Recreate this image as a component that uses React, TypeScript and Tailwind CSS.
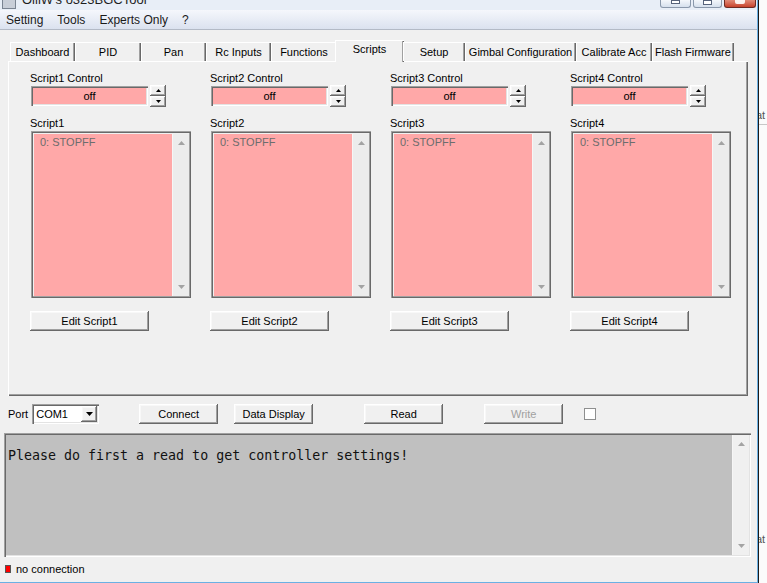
import React from 'react';

const raised =
  'bg-[#f0f0f0] shadow-[inset_-1px_-1px_#696969,inset_1px_1px_#ffffff,inset_-2px_-2px_#a0a0a0,inset_2px_2px_#f8f8f8]';
const sunken =
  'shadow-[inset_1px_1px_#a0a0a0,inset_2px_2px_#696969,inset_-1px_-1px_#ffffff,inset_-2px_-2px_#e3e3e3]';

const tabs = [
  { label: 'Dashboard', w: 65 },
  { label: 'PID', w: 66 },
  { label: 'Pan', w: 65 },
  { label: 'Rc Inputs', w: 65 },
  { label: 'Functions', w: 66 },
  { label: 'Scripts', w: 67, active: true },
  { label: 'Setup', w: 62 },
  { label: 'Gimbal Configuration', w: 111 },
  { label: 'Calibrate Acc', w: 76 },
  { label: 'Flash Firmware', w: 82 },
];

function Arrow({ up, color = '#000', w = 5 }: { up?: boolean; color?: string; w?: number }) {
  const h = Math.ceil(w / 2);
  return (
    <svg width={w} height={h} viewBox={`0 0 ${w} ${h}`}>
      <polygon points={up ? `0,${h} ${w},${h} ${w / 2},0` : `0,0 ${w},0 ${w / 2},${h}`} fill={color} />
    </svg>
  );
}

function ScrollBar({ className = '' }: { className?: string }) {
  return (
    <div className={`w-[17px] shrink-0 bg-[#ececec] border-l border-[#f6f6f6] flex flex-col justify-between items-center py-[7px] ${className}`}>
      <Arrow up color="#a3a3a3" w={7} />
      <Arrow color="#a3a3a3" w={7} />
    </div>
  );
}

function ScriptColumn({ n }: { n: number }) {
  return (
    <div className="w-[180px] shrink-0 flex flex-col">
      <div className="h-[14px] leading-[14px]">Script{n} Control</div>
      <div className="h-[22px] flex items-center">
        <div className={`ml-[1px] w-[117px] h-[20px] bg-[#ffa8a8] ${sunken} flex items-center justify-center`}>off</div>
        <div className="ml-[2px] flex flex-col">
          <div className={`w-[16px] h-[11px] ${raised} flex items-center justify-center`}>
            <Arrow up w={5} />
          </div>
          <div className={`w-[16px] h-[11px] ${raised} flex items-center justify-center`}>
            <Arrow w={5} />
          </div>
        </div>
      </div>
      <div className="mt-[9px] h-[14px] leading-[14px]">Script{n}</div>
      <div className="mt-[1px] ml-[1px] w-[160px] h-[167px] pt-[3px] pl-[3px] pr-[2px] pb-[2px] shadow-[inset_1px_1px_#a0a0a0,inset_2px_2px_#696969,inset_-1px_-1px_#696969,inset_-2px_-2px_#a0a0a0] flex">
        <div className="flex-1 bg-[#ffa8a8] text-[#6d6d6d] pl-[6px] leading-[14px] pt-[1px]">0: STOPFF</div>
        <ScrollBar />
      </div>
      <button className={`mt-[13px] w-[119px] h-[20px] ${raised} flex items-center justify-center text-black`}>
        Edit Script{n}
      </button>
    </div>
  );
}

export default function App() {
  return (
    <div className="w-[767px] h-[583px] bg-[#e4e4e4] flex overflow-hidden font-['Liberation_Sans',Arial,sans-serif] text-[11px] text-black">
      {/* main window */}
      <div className="w-[757px] shrink-0 flex flex-col">
        {/* title bar (cut at top) */}
        <div className="h-[10px] bg-[#e8eef7] flex overflow-hidden relative">
          <div className="ml-[2px] mt-[-5px] w-[14px] h-[14px] bg-[#c8ced8] border border-[#7a8492]" />
          <div className="ml-[6px] mt-[-8px] text-[13px] leading-[16px] text-[#1e1e1e]">OlliW's o323BGCTool</div>
          <div className="ml-auto flex gap-[2px] mr-[1px]">
            <div className="w-[31px] h-[8px] rounded-b-[3px] border border-t-0 border-[#8a98ab] bg-gradient-to-b from-[#f4f7fb] to-[#d6e0ed] flex justify-center">
              <div className="w-[9px] h-[4px] bg-white border border-[#56627a]" />
            </div>
            <div className="w-[29px] h-[8px] rounded-b-[3px] border border-t-0 border-[#8a98ab] bg-gradient-to-b from-[#f4f7fb] to-[#d6e0ed] flex justify-center">
              <div className="w-[9px] h-[5px] bg-white border border-[#56627a]" />
            </div>
            <div className="w-[32px] h-[8px] rounded-b-[3px] border border-t-0 border-[#6d2a22] bg-gradient-to-b from-[#e08a78] to-[#c7402a] flex justify-center">
              <div className="w-[10px] h-[4px] bg-white/90 rounded-b-[2px]" />
            </div>
          </div>
        </div>
        {/* menu bar */}
        <div className="h-[20px] bg-gradient-to-b from-[#f5f7fc] to-[#dbe2ef] border-b border-[#b3bac6] flex items-center text-[12px] text-[#1a1a1a]">
          <span className="ml-[6px]">Setting</span>
          <span className="ml-[14px]">Tools</span>
          <span className="ml-[14px]">Experts Only</span>
          <span className="ml-[14px]">?</span>
        </div>
        {/* client */}
        <div className="flex-1 bg-[#f0f0f0] flex flex-col">
          {/* tabs */}
          <div className="mt-[10px] h-[21px] pl-[10px] flex items-end relative z-10">
            {tabs.map((t) =>
              t.active ? (
                <div
                  key={t.label}
                  style={{ width: t.w + 2 }}
                  className="-ml-[2px] -mr-[1px] h-[22px] -mb-[1px] bg-[#f0f0f0] shadow-[inset_1px_1px_#ffffff,inset_-1px_0_#696969,inset_-2px_0_#a0a0a0] flex items-center justify-center pb-[4px]"
                >
                  {t.label}
                </div>
              ) : (
                <div
                  key={t.label}
                  style={{ width: t.w }}
                  className="h-[19px] bg-[#f0f0f0] shadow-[inset_1px_1px_#ffffff,inset_-1px_0_#696969,inset_-2px_0_#a0a0a0] flex items-center justify-center pt-[1px]"
                >
                  {t.label}
                </div>
              )
            )}
          </div>
          {/* tab page */}
          <div className="ml-[8px] w-[740px] h-[335px] shadow-[inset_1px_1px_#ffffff,inset_-1px_-1px_#696969,inset_-2px_-2px_#a0a0a0] pl-[22px] pt-[10px] flex overflow-hidden">
            {[1, 2, 3, 4].map((n) => (
              <ScriptColumn key={n} n={n} />
            ))}
          </div>
          {/* connection row */}
          <div className="mt-[8px] h-[20px] flex items-center">
            <span className="ml-[8px]">Port</span>
            <div className={`ml-[4px] w-[67px] h-[20px] bg-white ${sunken} flex items-center`}>
              <span className="ml-[4px] flex-1">COM1</span>
              <div className={`w-[16px] h-[16px] mr-[2px] ${raised} flex items-center justify-center`}>
                <Arrow w={7} />
              </div>
            </div>
            <button className={`ml-[40px] w-[79px] h-[20px] ${raised}`}>Connect</button>
            <button className={`ml-[16px] w-[79px] h-[20px] ${raised}`}>Data Display</button>
            <button className={`ml-[51px] w-[79px] h-[20px] ${raised}`}>Read</button>
            <button className={`ml-[41px] w-[79px] h-[20px] ${raised} text-[#a0a0a0]`}>Write</button>
            <div className="ml-[21px] w-[12px] h-[12px] bg-white border border-[#8e8f8f]" />
          </div>
          {/* output */}
          <div className={`mt-[9px] ml-[4px] w-[747px] h-[124px] bg-[#c0c0c0] ${sunken} p-[2px] flex`}>
            <div className="flex-1 pl-[2px] pt-[13px] font-['DejaVu_Sans_Mono',monospace] text-[13.3px] leading-[16px] text-[#111]">
              Please do first a read to get controller settings!
            </div>
            <ScrollBar className="bg-[#f0f0f0]" />
          </div>
          {/* status */}
          <div className="mt-[4px] h-[16px] flex items-center">
            <div className="ml-[5px] w-[6px] h-[8px] bg-[#ff0000] border border-[#555]" />
            <span className="ml-[5px]">no connection</span>
          </div>
        </div>
        <div className="h-[1px] bg-[#6bb0e3]" />
      </div>
      {/* window border + background window */}
      <div className="w-[1px] shrink-0 bg-[#6bb0e3]" />
      <div className="w-[1px] shrink-0 bg-[#1a1a1a]" />
      <div className="flex-1 bg-[#fbfbfb] flex flex-col overflow-hidden">
        <div className="h-[106px]" />
        <div className="h-[18px] leading-[18px] text-[#555] -ml-[3px]">at</div>
        <div className="h-[1px] bg-[#c8c8c8]" />
        <div className="h-[405px]" />
        <div className="h-[18px] leading-[18px] text-[#555] -ml-[3px]">at</div>
      </div>
    </div>
  );
}
